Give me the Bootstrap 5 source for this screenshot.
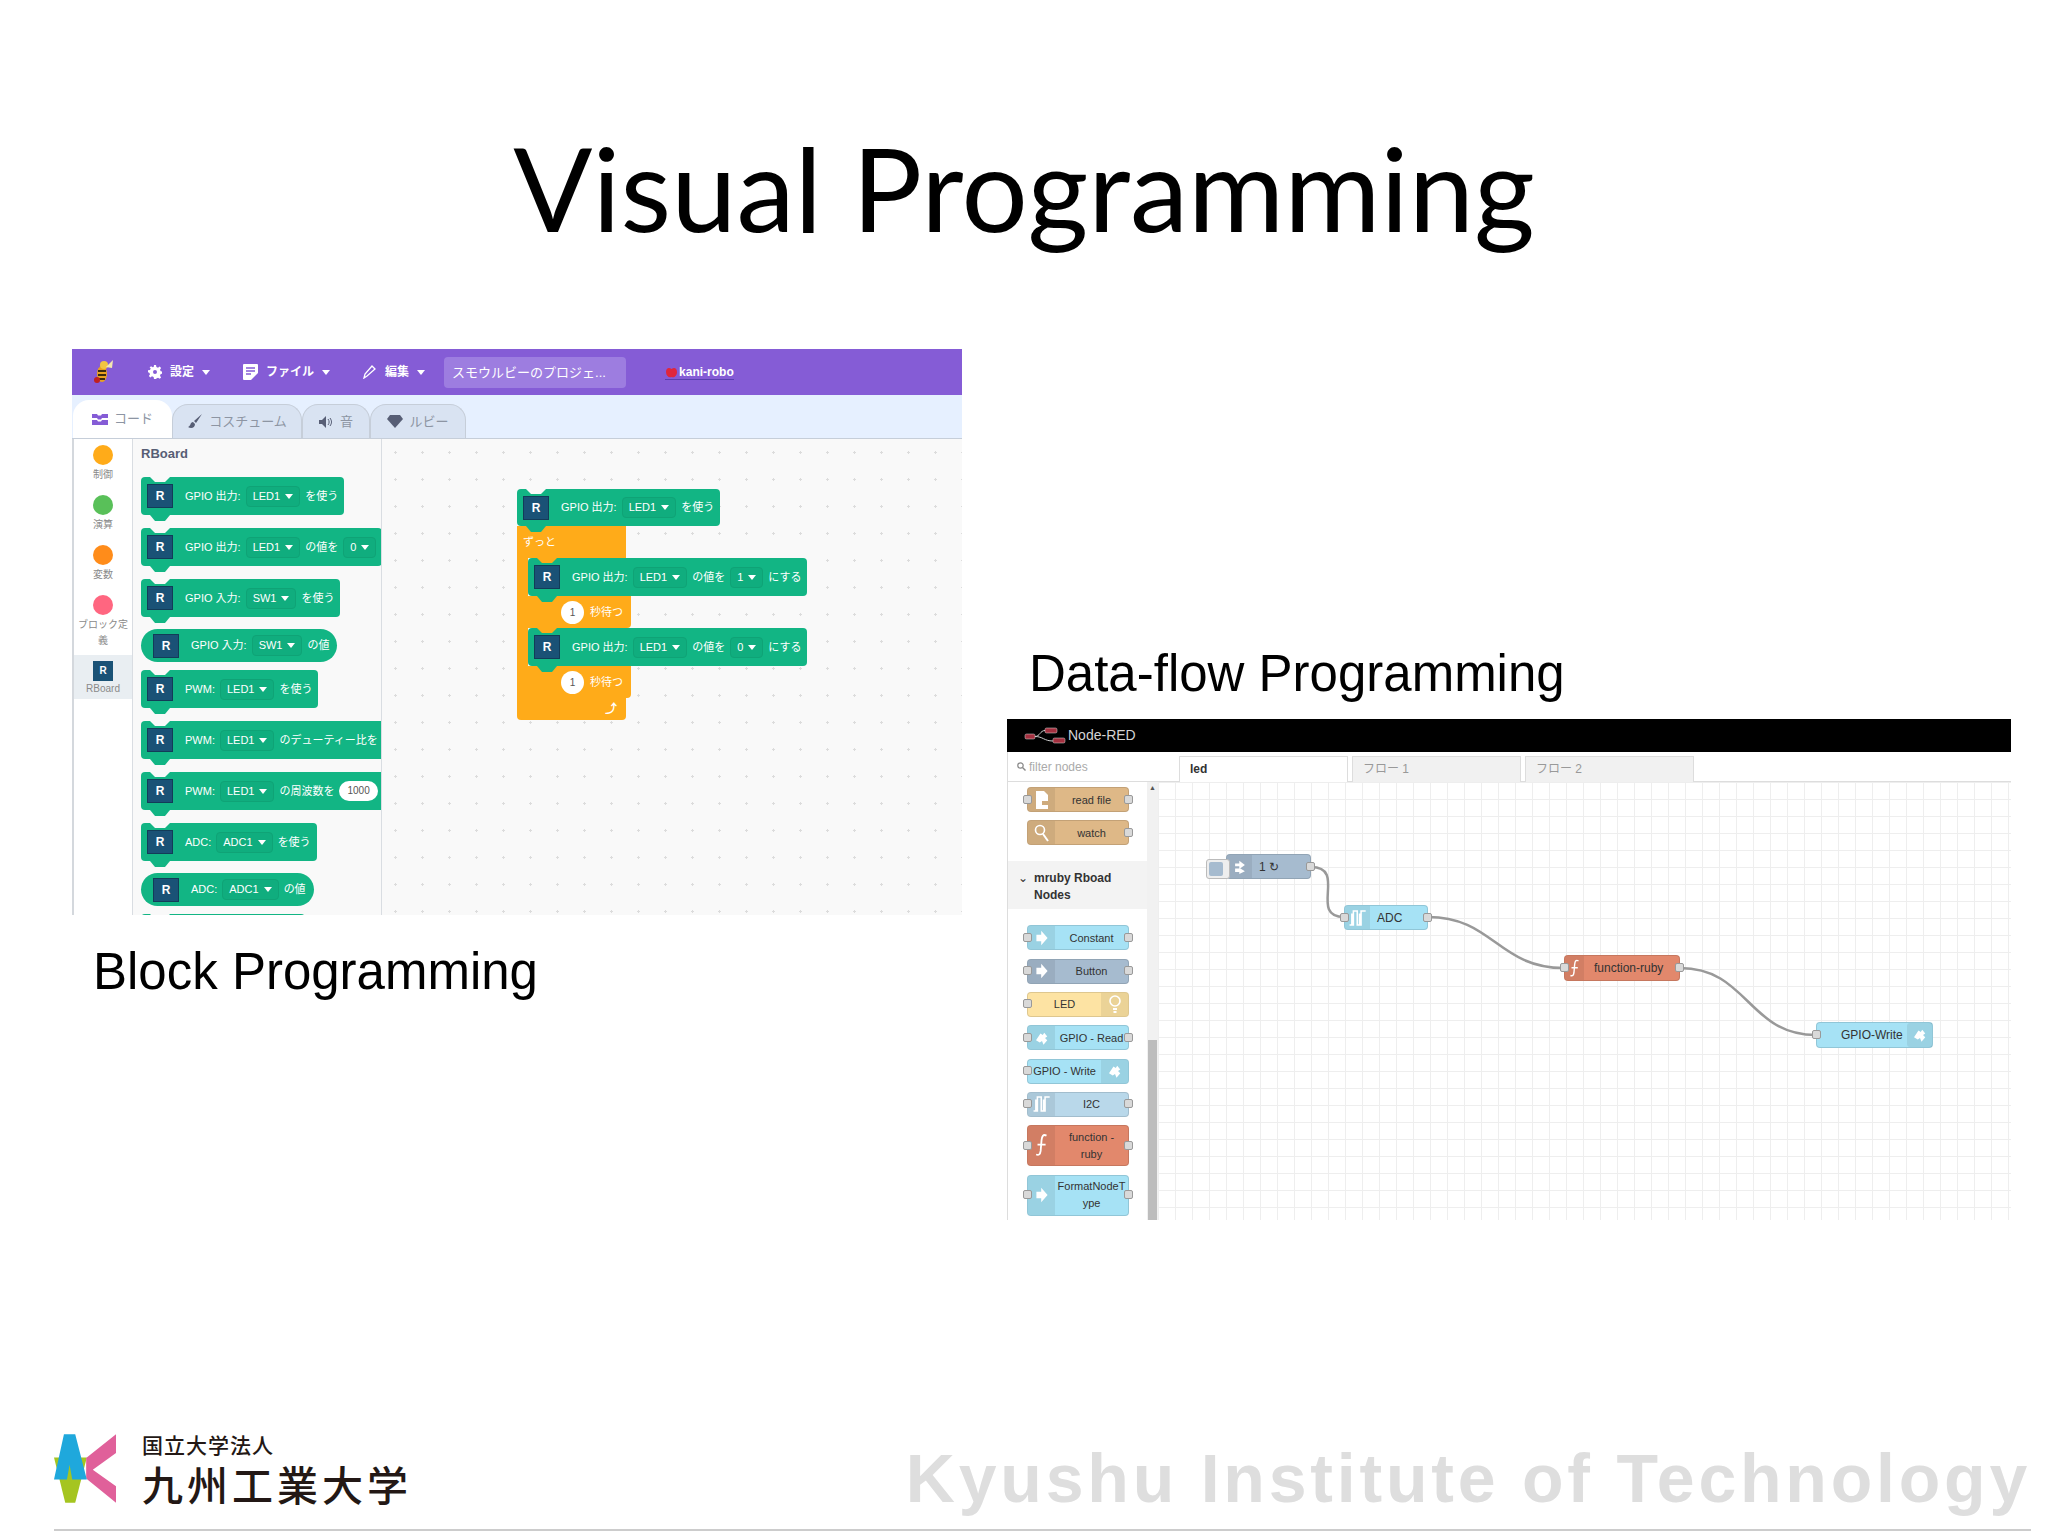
<!DOCTYPE html>
<html lang="ja">
<head>
<meta charset="UTF-8">
<title>Visual Programming</title>
<link href="https://cdn.jsdelivr.net/npm/bootstrap@5.3.0/dist/css/bootstrap.min.css" rel="stylesheet">
<style>
  body { background: #fff; margin: 0; }
  .slide { width: 2048px; height: 1536px; overflow: hidden; font-family: "Liberation Sans", "Noto Sans CJK JP", sans-serif; }
  .slide-title { height: 349px; margin: 0; padding-top: 122px; text-align: center; font-family: Lato, sans-serif; font-size: 117px; line-height: 130px; font-weight: 400; color: #000; }
  .col-left { width: 890px; margin-left: 72px; }
  .col-right { width: 1004px; margin-left: 45px; }
  .shot-label { font-size: 51px; line-height: 60px; color: #000; }
  .label-block { margin: 27px 0 0 21px; }
  .label-flow { margin: 295px 0 15px 22px; }

  /* scratch window */
  .sw { height: 566px; background: #fff; overflow: hidden; font-size: 11px; }
  .sw-top { height: 46px; background: #855cd6; color: #fff; font-size: 12px; font-weight: 700; padding-left: 20px; }
  .sw-menu { gap: 8px; }
  .sw-menu-settings { margin-left: 34px; }
  .sw-menu-file { margin-left: 33px; }
  .sw-menu-edit { margin-left: 33px; }
  .sw-caret { width: 0; height: 0; border: 4px solid transparent; border-top: 5px solid #fff; border-bottom: 0; }
  .sw-project { width: 182px; height: 31px; margin-left: 19px; padding-left: 8px; border-radius: 4px; background: #9d7de0; font-size: 13px; font-weight: 400; line-height: 31px; white-space: nowrap; }
  .sw-user { margin-left: 39px; gap: 1px; border-bottom: 1px solid #5a3fb0; line-height: 14px; }
  .sw-tabs { height: 44px; background: #e6f0ff; border-bottom: 1px solid #c6ced9; padding-left: 1px; }
  .sw-tab { height: 34px; gap: 6px; background: #d9e3f2; color: #8d95a3; border: 1px solid #c6ced9; border-bottom: 0; border-radius: 16px 16px 0 0; font-size: 13px; }
  .sw-tab-code { width: 99px; height: 38px; background: #fff; color: #8d95a3; border: 0; }
  .sw-tab-costume { width: 130px; }
  .sw-tab-sound { width: 68px; }
  .sw-tab-ruby { width: 96px; }
  .sw-body { height: 476px; overflow: hidden; }
  .sw-cats { width: 61px; border-left: 2px solid #d4d8dd; border-right: 1px solid #d9dde2; padding-top: 6px; text-align: center; color: #8a8a8a; font-size: 10px; line-height: 16px; }
  .cat-item { height: 50px; }
  .cat-dot { width: 20px; height: 20px; border-radius: 50%; margin: 0 auto 2px; }
  .cat-dot-control { background: #ffab19; }
  .cat-dot-op { background: #59c059; }
  .cat-dot-var { background: #ff8c1a; }
  .cat-dot-def { background: #ff6680; }
  .cat-tile { height: 44px; margin-top: 10px; padding-top: 6px; background: #e9eef2; }
  .r-tile { width: 20px; height: 20px; margin: 0 auto; background: #1a5276; color: #fff; font-size: 10px; line-height: 20px; font-weight: 700; }
  .sw-fly { width: 249px; background: #f9f9f9; border-right: 1px solid #d9dde2; padding: 7px 0 0 8px; overflow: hidden; }
  .fly-title { flex: none; height: 31px; font-size: 13px; line-height: 16px; font-weight: 700; color: #575e75; }
  .sw-canvas { width: 580px; position: relative; background-color: #f9f9f9; background-image: radial-gradient(#dcdcdc 1px, transparent 1.2px); background-size: 27px 27px; }

  /* blocks */
  .sb { --notch: #f9f9f9; position: relative; flex: none; width: max-content; height: 38px; margin-bottom: 13px; padding: 0 6px; gap: 5px; background: #12b584; color: #fff; border-radius: 4px; white-space: nowrap; font-size: 11px; }
  .sb::before, .sb::after { content: ""; position: absolute; left: 9px; width: 20px; clip-path: polygon(0 0, 100% 0, 75% 100%, 25% 100%); }
  .sb::before { top: 0; height: 5px; background: var(--notch); }
  .sb::after { top: 100%; height: 6px; background: #12b584; z-index: 1; }
  .sb-round { height: 33px; margin-bottom: 8px; margin-top: -1px; padding: 0 8px 0 12px; border-radius: 17px; }
  .sb-round::before, .sb-round::after { display: none; }
  .sb-tall { height: 37px; }
  .sb-last { width: 164px; }
  .sb-r { width: 26px; height: 24px; margin-right: 7px; background: #1a5276; border: 1px solid #123c58; color: #fff; font-size: 12px; font-weight: 700; text-align: center; line-height: 22px; }
  .sb-dd { height: 21px; gap: 5px; padding: 0 6px; background: #10ad7e; border: 1px solid #0fa376; border-radius: 4px; }
  .sb-num { height: 20px; padding: 0 8px; background: #fff; color: #555; border-radius: 10px; font-size: 10px; line-height: 20px; }
  .sb-orange { background: #ffab19; color: #fff; font-size: 11px; }
  .stack { position: absolute; left: 135px; top: 50px; }
  .sb-hat { margin: 0; }
  .sb-in { --notch: #ffab19; margin: 0; }
  .c-top { width: 109px; height: 32px; padding-left: 6px; line-height: 32px; }
  .c-body { border-left: 11px solid #ffab19; }
  .c-wait { width: 103px; height: 32px; padding-left: 33px; gap: 6px; border-radius: 0 0 4px 0; }
  .c-wait-num { width: 23px; height: 23px; flex: none; border-radius: 50%; background: #fff; color: #555; font-size: 10px; line-height: 23px; text-align: center; }
  .c-foot { width: 109px; height: 22px; padding-right: 9px; border-radius: 0 0 4px 4px; text-align: right; line-height: 22px; font-size: 12px; font-weight: 700; }

  /* node-red window */
  .nr { height: 501px; overflow: hidden; }
  .nr-head { height: 33px; padding-left: 17px; gap: 2px; background: #000; color: #d4d4d4; font-size: 14px; }
  .nr-main { height: 468px; }
  .nr-side { width: 151px; border-left: 1px solid #ddd; }
  .nr-filter { height: 30px; padding-left: 9px; gap: 3px; border-bottom: 1px solid #ddd; color: #aaa; font-size: 12px; }
  .nr-pal { height: 438px; }
  .nr-list { width: 140px; padding-top: 5px; }
  .nr-scroll { width: 11px; background: #f1f1f1; position: relative; color: #555; font-size: 7px; text-align: center; line-height: 12px; }
  .nr-thumb { position: absolute; left: 1px; right: 1px; bottom: 0; height: 180px; background: #bdbdbd; }
  .nr-stack { padding-left: 19px; gap: 8.33px; }
  .pal-cat { height: 48px; margin: 16px 0; padding: 9px 0 0 10px; gap: 6px; background: #f3f3f3; color: #333; font-size: 12px; line-height: 17px; font-weight: 700; }
  .pn { position: relative; width: 102px; height: 25px; border: 1px solid rgba(0,0,0,.12); border-radius: 4px; color: #333; font-size: 11px; line-height: 14px; text-align: center; }
  .pn-tall { height: 41px; line-height: 17px; }
  .pn-ic { flex: none; width: 27px; background: rgba(0,0,0,.07); border-radius: 3px 0 0 3px; }
  .pn-ic-r { border-radius: 0 3px 3px 0; }
  .pn-tx { min-width: 0; flex: 1; }
  .port { position: absolute; top: 50%; width: 9px; height: 9px; margin-top: -5px; background: #d9d9d9; border: 1px solid #999; border-radius: 2px; z-index: 2; }
  .port-l { left: -5px; }
  .port-r { right: -5px; }
  .nc-tan { background: #deb887; }
  .nc-grey { background: #a6bbcf; }
  .nc-sky { background: #a6e2f5; }
  .nc-led { background: #fde3a3; }
  .nc-i2c { background: #b9d8ea; }
  .nc-fn { background: #e2886c; }
  .nr-ws { position: relative; width: 853px; }
  .nr-tabs { height: 30px; padding: 4px 0 0 21px; gap: 4px; border-bottom: 1px solid #ddd; }
  .nr-tab { width: 169px; height: 26px; padding-left: 10px; background: #f1f1f1; border: 1px solid #ddd; border-bottom: 0; color: #999; font-size: 12px; line-height: 25px; }
  .nr-tab-on { background: #fff; color: #333; font-weight: 700; margin-bottom: -1px; height: 27px; }
  .nr-grid { position: relative; height: 438px; background-image: linear-gradient(#eee 1px, transparent 1px), linear-gradient(90deg, #eee 1px, transparent 1px); background-size: 17px 17px; }
  .nr-wires { position: absolute; left: 0; top: 0; }
  .wn { position: absolute; height: 25px; white-space: nowrap; text-align: left; font-size: 12px; }
  .wn-inject { left: 68px; top: 72px; width: 85px; }
  .wn-adc { left: 186px; top: 123px; width: 84px; }
  .wn-fn { left: 406px; top: 173px; width: 116px; height: 26px; }
  .wn-gw { left: 658px; top: 240px; width: 117px; height: 26px; }
  .wn-btn { position: absolute; left: -21px; top: 4px; width: 24px; height: 20px; background: #eee; border: 1px solid #bbb; border-radius: 3px; padding: 2px; }
  .wn-btn-in { display: block; width: 14px; height: 14px; background: #a6bbcf; border-radius: 2px; }
  .wn .pn-ic { width: 25px; }
  .wn .pn-tx { padding-left: 7px; }
  .wn-gw .pn-tx { padding-left: 24px; }
  .wn-fn .pn-ic { width: 19px; }
  .wn-fn .pn-tx { padding-left: 10px; }

  /* footer */
  .foot { height: 97px; margin: auto 17px 5px 54px; border-bottom: 2px solid #ccc; }
  .foot-logo { flex: none; }
  .foot-uni { margin-left: 26px; color: #231815; }
  .foot-sub { font-size: 21px; line-height: 24px; letter-spacing: 1px; font-weight: 500; }
  .foot-name { margin-top: 7px; font-size: 41px; line-height: 44px; letter-spacing: 4px; font-weight: 500; }
  .foot-en { margin: 6px 0 0 auto; font-size: 68px; line-height: 76px; font-weight: 700; color: #dedede; letter-spacing: 3.8px; white-space: nowrap; }
</style>
</head>
<body>
<svg width="0" height="0" class="position-absolute">
  <defs>
    <symbol id="ic-in" viewBox="0 0 20 24"><path d="M3 8h6V3l8 9-8 9v-5H3z" fill="#fff"/></symbol>
    <symbol id="ic-inject" viewBox="0 0 20 24"><path d="M3 7h6V3l8 6-8 6v-4H3zM3 14h6v-1l8 5-8 4v-3H3z" fill="#fff"/></symbol>
    <symbol id="ic-wave" viewBox="0 0 26 24"><path d="M2 21h5V3h5v18h5V3h6M5 21V6M15 21V6" fill="none" stroke="#fff" stroke-width="2"/></symbol>
    <symbol id="ic-fn" viewBox="0 0 20 30"><path d="M15 4c-4-2-5 1-5.500 5l-1 12c-.5 4-2 5-5 4M5 14h9" fill="none" stroke="#fff" stroke-width="2"/></symbol>
    <symbol id="ic-pi" viewBox="0 0 24 24"><path d="M4 15l6-9 3 2 2-3 4 5-3 2 3 3-5 6-2-5-3 2z" fill="#fff"/></symbol>
  </defs>
</svg>
<div class="slide d-flex flex-column">
  <h1 class="slide-title">Visual Programming</h1>
  <div class="d-flex">
    <div class="col-left">
      <div class="sw">
        <div class="sw-top d-flex align-items-center">
          <svg width="22" height="26" viewBox="0 0 22 26"><ellipse cx="10" cy="15" rx="5" ry="8" fill="#e8a020"/><path d="M6 12h8M6 16h8M7 20h6" stroke="#3a2a10" stroke-width="2"/><circle cx="12" cy="6" r="4" fill="#f2c640"/><path d="M14 8L21 1l-1 8z" fill="#f4e6b0"/><circle cx="5" cy="21" r="3" fill="#c02020"/></svg>
          <div class="sw-menu sw-menu-settings d-flex align-items-center">
            <svg width="14" height="14" viewBox="0 0 14 14"><path fill="#fff" fill-rule="evenodd" d="M6 0h2l.4 2 1.600.7L11.700 1.600l1.400 1.400-1.100 1.700.7 1.600 2 .4v2l-2 .4-.7 1.600 1.100 1.700-1.400 1.400-1.700-1.100-1.600.7L8 14H6l-.4-2-1.600-.7-1.700 1.100L.9 11l1.100-1.700L1.300 7.700l-1.300-.4v-2l2-.4.7-1.600L1.600 2.600 3 1.200l1.700 1.100 1-.4zM7 5a2 2 0 100 4 2 2 0 000-4z"/></svg>
            <span>設定</span><span class="sw-caret"></span>
          </div>
          <div class="sw-menu sw-menu-file d-flex align-items-center">
            <svg width="15" height="17" viewBox="0 0 15 17"><path fill="#fff" d="M1 0h13a1 1 0 011 1v8l-7 7H1a1 1 0 01-1-1V1a1 1 0 011-1z"/><path d="M3 4h9M3 7h9M3 10h5" stroke="#855cd6" stroke-width="1.500"/></svg>
            <span>ファイル</span><span class="sw-caret"></span>
          </div>
          <div class="sw-menu sw-menu-edit d-flex align-items-center">
            <svg width="14" height="14" viewBox="0 0 14 14"><path d="M1 13l1-4 7-8 3 3-8 7z" fill="none" stroke="#fff" stroke-width="1.300"/></svg>
            <span>編集</span><span class="sw-caret"></span>
          </div>
          <div class="sw-project">スモウルビーのプロジェ...</div>
          <div class="sw-user d-flex align-items-center">
            <svg width="13" height="12" viewBox="0 0 13 12"><path d="M6.500 3C9 1 12 2 12 6s-3 6-5.500 5C4 12 1 10 1 6s3-5 5.500-3z" fill="#e0263c"/></svg>
            <span>kani-robo</span>
          </div>
        </div>
        <div class="sw-tabs d-flex align-items-end">
          <div class="sw-tab sw-tab-code d-flex align-items-center justify-content-center">
            <svg width="16" height="11" viewBox="0 0 16 11"><path fill="#855cd6" d="M0 0h5l1 1.500h3L10 0h6v4H10L9 5.500H6L5 4H0zM0 6h5l1 1.500h3L10 6h6v5H0z"/></svg>
            <span>コード</span>
          </div>
          <div class="sw-tab sw-tab-costume d-flex align-items-center justify-content-center">
            <svg width="16" height="16" viewBox="0 0 16 16"><path d="M15 0L7 7l2 2zM6 8c-3 0-2 4-5 5 3 2 7 1 7-3z" fill="#575e75"/></svg>
            <span>コスチューム</span>
          </div>
          <div class="sw-tab sw-tab-sound d-flex align-items-center justify-content-center">
            <svg width="15" height="12" viewBox="0 0 15 12"><path d="M0 4h3l4-4v12L3 8H0z" fill="#575e75"/><path d="M9 3c1.500 2 1.500 4 0 6M11 2c2 3 2 5 0 8" stroke="#575e75" fill="none"/></svg>
            <span>音</span>
          </div>
          <div class="sw-tab sw-tab-ruby d-flex align-items-center justify-content-center">
            <svg width="16" height="13" viewBox="0 0 16 13"><path d="M3 0h10l3 4-8 9-8-9z" fill="#575e75"/></svg>
            <span>ルビー</span>
          </div>
        </div>
        <div class="sw-body d-flex">
          <div class="sw-cats">
            <div class="cat-item"><div class="cat-dot cat-dot-control"></div>制御</div>
            <div class="cat-item"><div class="cat-dot cat-dot-op"></div>演算</div>
            <div class="cat-item"><div class="cat-dot cat-dot-var"></div>変数</div>
            <div class="cat-item"><div class="cat-dot cat-dot-def"></div>ブロック定義</div>
            <div class="cat-tile"><div class="r-tile">R</div>RBoard</div>
          </div>
          <div class="sw-fly d-flex flex-column">
            <div class="fly-title">RBoard</div>
            <div class="sb d-flex align-items-center"><span class="sb-r">R</span><span>GPIO 出力:</span><span class="sb-dd d-flex align-items-center">LED1<span class="sw-caret"></span></span><span>を使う</span></div>
            <div class="sb d-flex align-items-center"><span class="sb-r">R</span><span>GPIO 出力:</span><span class="sb-dd d-flex align-items-center">LED1<span class="sw-caret"></span></span><span>の値を</span><span class="sb-dd d-flex align-items-center">0<span class="sw-caret"></span></span></div>
            <div class="sb d-flex align-items-center"><span class="sb-r">R</span><span>GPIO 入力:</span><span class="sb-dd d-flex align-items-center">SW1<span class="sw-caret"></span></span><span>を使う</span></div>
            <div class="sb sb-round d-flex align-items-center"><span class="sb-r">R</span><span>GPIO 入力:</span><span class="sb-dd d-flex align-items-center">SW1<span class="sw-caret"></span></span><span>の値</span></div>
            <div class="sb d-flex align-items-center"><span class="sb-r">R</span><span>PWM:</span><span class="sb-dd d-flex align-items-center">LED1<span class="sw-caret"></span></span><span>を使う</span></div>
            <div class="sb d-flex align-items-center"><span class="sb-r">R</span><span>PWM:</span><span class="sb-dd d-flex align-items-center">LED1<span class="sw-caret"></span></span><span>のデューティー比を</span></div>
            <div class="sb d-flex align-items-center"><span class="sb-r">R</span><span>PWM:</span><span class="sb-dd d-flex align-items-center">LED1<span class="sw-caret"></span></span><span>の周波数を</span><span class="sb-num">1000</span></div>
            <div class="sb d-flex align-items-center"><span class="sb-r">R</span><span>ADC:</span><span class="sb-dd d-flex align-items-center">ADC1<span class="sw-caret"></span></span><span>を使う</span></div>
            <div class="sb sb-round d-flex align-items-center"><span class="sb-r">R</span><span>ADC:</span><span class="sb-dd d-flex align-items-center">ADC1<span class="sw-caret"></span></span><span>の値</span></div>
            <div class="sb sb-last"></div>
          </div>
          <div class="sw-canvas">
            <div class="stack">
              <div class="sb sb-hat sb-tall d-flex align-items-center"><span class="sb-r">R</span><span>GPIO 出力:</span><span class="sb-dd d-flex align-items-center">LED1<span class="sw-caret"></span></span><span>を使う</span></div>
              <div class="sb-orange c-top">ずっと</div>
              <div class="c-body">
                <div class="sb sb-in d-flex align-items-center"><span class="sb-r">R</span><span>GPIO 出力:</span><span class="sb-dd d-flex align-items-center">LED1<span class="sw-caret"></span></span><span>の値を</span><span class="sb-dd d-flex align-items-center">1<span class="sw-caret"></span></span><span>にする</span></div>
                <div class="sb-orange c-wait d-flex align-items-center"><span class="c-wait-num">1</span><span>秒待つ</span></div>
                <div class="sb sb-in d-flex align-items-center"><span class="sb-r">R</span><span>GPIO 出力:</span><span class="sb-dd d-flex align-items-center">LED1<span class="sw-caret"></span></span><span>の値を</span><span class="sb-dd d-flex align-items-center">0<span class="sw-caret"></span></span><span>にする</span></div>
                <div class="sb-orange c-wait d-flex align-items-center"><span class="c-wait-num">1</span><span>秒待つ</span></div>
              </div>
              <div class="sb-orange c-foot">&#10548;</div>
            </div>
          </div>
        </div>
      </div>
      <div class="shot-label label-block">Block Programming</div>
    </div>
    <div class="col-right">
      <div class="shot-label label-flow">Data-flow Programming</div>
      <div class="nr">
        <div class="nr-head d-flex align-items-center">
          <svg width="42" height="20" viewBox="0 0 42 20"><path d="M11 10.500c5 0 5-6 10-6M11 10.500c8 0 9 4.500 18 4.500" stroke="#ccc" fill="none"/><rect x="1" y="8" width="10" height="5" rx="1.500" fill="#a4303f" stroke="#ddd" stroke-width=".5"/><rect x="21" y="2" width="12" height="5" rx="1.500" fill="#a4303f" stroke="#ddd" stroke-width=".5"/><rect x="29" y="12" width="12" height="5" rx="1.500" fill="#a4303f" stroke="#ddd" stroke-width=".5"/></svg>
          <span>Node-RED</span>
        </div>
        <div class="nr-main d-flex">
          <div class="nr-side">
            <div class="nr-filter d-flex align-items-center">
              <svg width="9" height="9" viewBox="0 0 9 9"><circle cx="3.500" cy="3.500" r="2.700" fill="none" stroke="#888" stroke-width="1.200"/><path d="M5.500 5.500L8.500 8.500" stroke="#888" stroke-width="1.400"/></svg>
              <span>filter nodes</span>
            </div>
            <div class="nr-pal d-flex">
              <div class="nr-list">
                <div class="nr-stack d-flex flex-column">
                  <div class="pn nc-tan d-flex align-items-stretch"><span class="port port-l"></span><span class="pn-ic d-flex align-items-center justify-content-center"><svg width="14" height="18" viewBox="0 0 14 18"><path d="M1 0h8l4 4v6H7v4h6v4H1z" fill="#fff"/></svg></span><span class="pn-tx align-self-center">read file</span><span class="port port-r"></span></div>
                  <div class="pn nc-tan d-flex align-items-stretch"><span class="pn-ic d-flex align-items-center justify-content-center"><svg width="16" height="18" viewBox="0 0 16 18"><circle cx="6" cy="6" r="4.500" fill="none" stroke="#fff" stroke-width="1.600"/><path d="M9 10l5 7" stroke="#fff" stroke-width="2"/></svg></span><span class="pn-tx align-self-center">watch</span><span class="port port-r"></span></div>
                </div>
                <div class="pal-cat d-flex"><span class="fw-normal">&#8964;</span><span>mruby Rboad Nodes</span></div>
                <div class="nr-stack d-flex flex-column">
                  <div class="pn nc-sky d-flex align-items-stretch"><span class="port port-l"></span><span class="pn-ic d-flex align-items-center justify-content-center"><svg width="16" height="20"><use href="#ic-in"/></svg></span><span class="pn-tx align-self-center">Constant</span><span class="port port-r"></span></div>
                  <div class="pn nc-grey d-flex align-items-stretch"><span class="port port-l"></span><span class="pn-ic d-flex align-items-center justify-content-center"><svg width="16" height="20"><use href="#ic-in"/></svg></span><span class="pn-tx align-self-center">Button</span><span class="port port-r"></span></div>
                  <div class="pn nc-led d-flex align-items-stretch"><span class="port port-l"></span><span class="pn-tx align-self-center">LED</span><span class="pn-ic pn-ic-r d-flex align-items-center justify-content-center"><svg width="14" height="20" viewBox="0 0 14 20"><circle cx="7" cy="7" r="5" fill="none" stroke="#fff" stroke-width="1.600"/><path d="M5 14h4v2H5zM5.500 17h3v2h-3z" fill="#fff"/></svg></span></div>
                  <div class="pn nc-sky d-flex align-items-stretch"><span class="port port-l"></span><span class="pn-ic d-flex align-items-center justify-content-center"><svg width="18" height="18"><use href="#ic-pi"/></svg></span><span class="pn-tx align-self-center">GPIO - Read</span><span class="port port-r"></span></div>
                  <div class="pn nc-sky d-flex align-items-stretch"><span class="port port-l"></span><span class="pn-tx align-self-center">GPIO - Write</span><span class="pn-ic pn-ic-r d-flex align-items-center justify-content-center"><svg width="18" height="18"><use href="#ic-pi"/></svg></span></div>
                  <div class="pn nc-i2c d-flex align-items-stretch"><span class="port port-l"></span><span class="pn-ic d-flex align-items-center justify-content-center"><svg width="20" height="20"><use href="#ic-wave"/></svg></span><span class="pn-tx align-self-center">I2C</span><span class="port port-r"></span></div>
                  <div class="pn pn-tall nc-fn d-flex align-items-stretch"><span class="port port-l"></span><span class="pn-ic d-flex align-items-center justify-content-center"><svg width="18" height="27"><use href="#ic-fn"/></svg></span><span class="pn-tx align-self-center">function -<br>ruby</span><span class="port port-r"></span></div>
                  <div class="pn pn-tall nc-sky d-flex align-items-stretch"><span class="port port-l"></span><span class="pn-ic d-flex align-items-center justify-content-center"><svg width="16" height="20"><use href="#ic-in"/></svg></span><span class="pn-tx align-self-center">FormatNodeT<br>ype</span><span class="port port-r"></span></div>
                </div>
              </div>
              <div class="nr-scroll">&#9650;<div class="nr-thumb"></div></div>
            </div>
          </div>
          <div class="nr-ws">
            <div class="nr-tabs d-flex">
              <div class="nr-tab nr-tab-on">led</div>
              <div class="nr-tab">フロー 1</div>
              <div class="nr-tab">フロー 2</div>
            </div>
            <div class="nr-grid">
              <svg class="nr-wires" width="853" height="438" fill="none" stroke="#999" stroke-width="2.500">
                <path d="M153 85C190 85 150 135 186 135"/>
                <path d="M270 135C335 135 340 186 406 186"/>
                <path d="M522 186C590 186 590 253 658 253"/>
              </svg>
              <div class="pn wn wn-inject nc-grey d-flex align-items-stretch"><span class="wn-btn"><span class="wn-btn-in"></span></span><span class="pn-ic d-flex align-items-center justify-content-center"><svg width="14" height="20"><use href="#ic-inject"/></svg></span><span class="pn-tx align-self-center">1 &#8635;</span><span class="port port-r"></span></div>
              <div class="pn wn wn-adc nc-sky d-flex align-items-stretch"><span class="port port-l"></span><span class="pn-ic d-flex align-items-center justify-content-center"><svg width="20" height="20"><use href="#ic-wave"/></svg></span><span class="pn-tx align-self-center">ADC</span><span class="port port-r"></span></div>
              <div class="pn wn wn-fn nc-fn d-flex align-items-stretch"><span class="port port-l"></span><span class="pn-ic d-flex align-items-center justify-content-center"><svg width="14" height="21"><use href="#ic-fn"/></svg></span><span class="pn-tx align-self-center">function-ruby</span><span class="port port-r"></span></div>
              <div class="pn wn wn-gw nc-sky d-flex align-items-stretch"><span class="port port-l"></span><span class="pn-tx align-self-center">GPIO-Write</span><span class="pn-ic d-flex align-items-center justify-content-center"><svg width="18" height="18"><use href="#ic-pi"/></svg></span></div>
            </div>
          </div>
        </div>
      </div>
    </div>
  </div>
  <div class="foot d-flex align-items-start">
    <svg class="foot-logo" width="62" height="69" viewBox="73 73 187 207">
      <path d="M73 143H172L137 280H107z" fill="#a5c520"/>
      <path d="M260 73V130L190 180 260 230V280L170 207V145z" fill="#e0609a"/>
      <path d="M103 73H137L172 210H128L120 165 112 210H73z" fill="#1fa8dc"/>
    </svg>
    <div class="foot-uni">
      <div class="foot-sub">国立大学法人</div>
      <div class="foot-name">九州工業大学</div>
    </div>
    <div class="foot-en">Kyushu Institute of Technology</div>
  </div>
</div>
<script src="https://cdn.jsdelivr.net/npm/bootstrap@5.3.0/dist/js/bootstrap.bundle.min.js"></script>
</body>
</html>
